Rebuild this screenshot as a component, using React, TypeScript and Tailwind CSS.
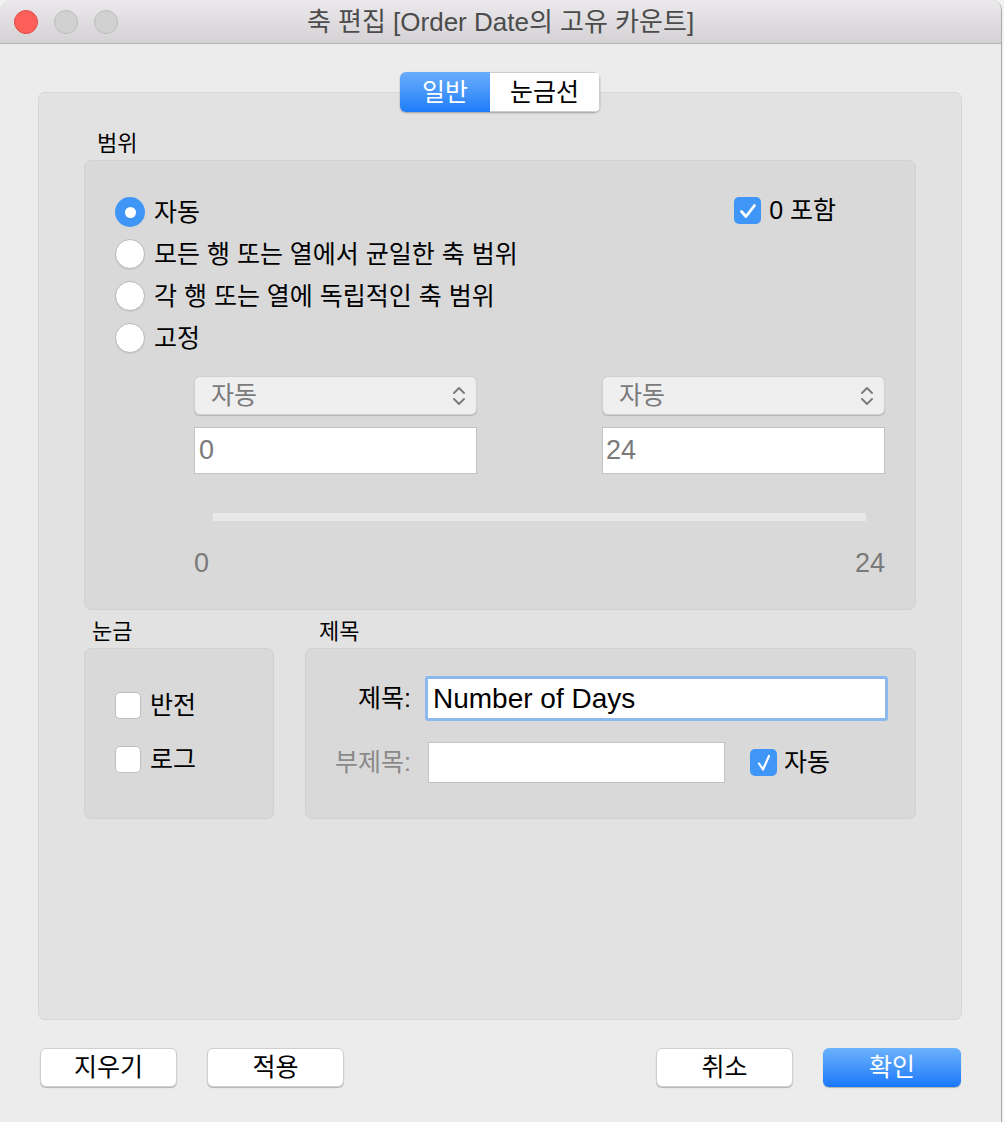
import React from 'react'

const FONT = "font-['Liberation_Sans','Noto_Sans_CJK_KR',sans-serif]"

const Radio = ({ checked, label }: { checked?: boolean; label: string }) => (
  <div className="flex h-[30px] items-center">
    {checked ? (
      <div className="flex h-[30px] w-[30px] items-center justify-center rounded-full bg-[#3f96f6]">
        <div className="h-[11px] w-[11px] rounded-full bg-white" />
      </div>
    ) : (
      <div className="h-[30px] w-[30px] rounded-full border border-[#b9b9b9] bg-white shadow-[0_1px_1px_rgba(0,0,0,0.08)]" />
    )}
    <span className="ml-[9px] text-[25px] leading-none text-black">{label}</span>
  </div>
)

const Check = ({ checked, thin }: { checked?: boolean; thin?: boolean }) =>
  checked ? (
    <div className="flex h-[27px] w-[27px] items-center justify-center rounded-[5px] bg-[#3f96f6]">
      <svg width="20" height="20" viewBox="0 0 20 20" fill="none">
        <path
          d={thin ? 'M5 10.5 L9 16.5 L15 3' : 'M3.5 10.5 L8 15.5 L16.5 4.5'}
          stroke="white"
          strokeWidth={thin ? 2.2 : 2.8}
          strokeLinecap="round"
          strokeLinejoin="round"
        />
      </svg>
    </div>
  ) : (
    <div className="h-[27px] w-[26px] rounded-[5px] border border-[#bdbdbd] bg-white" />
  )

const Select = () => (
  <div className="flex h-[39px] w-[283px] items-center justify-between rounded-[6px] border border-[#d0d0d0] bg-[#efefef] pl-[16px] pr-[10px] shadow-[0_1px_1px_rgba(0,0,0,0.18)]">
    <span className="text-[25px] leading-none text-[#7b7b7b]">자동</span>
    <svg width="14" height="24" viewBox="0 0 14 24" fill="none">
      <path d="M2 9 L7 4 L12 9" stroke="#7d7d7d" strokeWidth="2" strokeLinecap="round" strokeLinejoin="round" />
      <path d="M2 15 L7 20 L12 15" stroke="#7d7d7d" strokeWidth="2" strokeLinecap="round" strokeLinejoin="round" />
    </svg>
  </div>
)

const Button = ({ label, primary }: { label: string; primary?: boolean }) => (
  <button
    className={
      primary
        ? 'flex h-[39px] w-[138px] items-center justify-center rounded-[6px] bg-gradient-to-b from-[#6bb2fb] to-[#1577fa] text-[25px] leading-none text-white shadow-[0_1px_1px_rgba(0,0,0,0.25)]'
        : 'flex h-[39px] w-[137px] items-center justify-center rounded-[6px] border border-[#cfcfcf] bg-white text-[25px] leading-none text-black shadow-[0_1px_1px_rgba(0,0,0,0.25)]'
    }
  >
    {label}
  </button>
)

export default function App() {
  return (
    <div className={`${FONT} flex h-[1122px] w-[1004px] bg-[#f2f2f2]`}>
      <div className="flex h-full w-[1002px] flex-col overflow-hidden rounded-t-[10px] border-r border-[#a9a9a9] bg-[#ececec]">
        {/* title bar */}
        <div className="relative flex h-[44px] shrink-0 items-center justify-center border-b border-[#b1b1b1] bg-gradient-to-b from-[#ebe9eb] to-[#d4d2d4]">
          <div className="absolute left-[14px] top-[10px] flex gap-[16px]">
            <div className="h-[24px] w-[24px] rounded-full border border-[#e14942] bg-[#fc5f58]" />
            <div className="h-[24px] w-[24px] rounded-full border border-[#bcbcbc] bg-[#d1d1d1]" />
            <div className="h-[24px] w-[24px] rounded-full border border-[#bcbcbc] bg-[#d1d1d1]" />
          </div>
          <span className="text-[26px] leading-none text-[#4c4c4c]">축 편집 [Order Date의 고유 카운트]</span>
        </div>

        {/* main panel */}
        <div className="ml-[38px] mt-[48px] flex h-[928px] w-[924px] flex-col rounded-[7px] border border-[#d6d6d6] bg-[#e2e2e2] px-[45px]">
          <div className="-mt-[21px] flex self-center overflow-hidden rounded-[6px] shadow-[0_1px_2px_rgba(0,0,0,0.3)]">
            <div className="flex h-[40px] w-[90px] items-center justify-center bg-gradient-to-b from-[#69adfb] to-[#1b7cf9] text-[25px] leading-none text-white">
              일반
            </div>
            <div className="flex h-[40px] w-[110px] items-center justify-center border border-l-0 border-[#cdcdcd] bg-white text-[25px] leading-none text-black">
              눈금선
            </div>
          </div>

          <div className="ml-[13px] mt-[20px] text-[22px] leading-[24px] text-black">범위</div>
          <div className="mt-[4px] flex h-[450px] flex-col rounded-[7px] border border-[#d0d0d0] bg-[#d9d9d9] pl-[30px] pr-[30px] pt-[36px]">
            <div className="flex items-start justify-between pr-[49px]">
              <div className="flex flex-col gap-[12px]">
                <Radio checked label="자동" />
                <Radio label="모든 행 또는 열에서 균일한 축 범위" />
                <Radio label="각 행 또는 열에 독립적인 축 범위" />
                <Radio label="고정" />
              </div>
              <div className="flex items-center">
                <Check checked />
                <span className="ml-[8px] text-[25px] leading-none text-black">0 포함</span>
              </div>
            </div>

            <div className="ml-[79px] mt-[23px] flex flex-col">
              <div className="flex justify-between">
                <Select />
                <Select />
              </div>
              <div className="mt-[12px] flex justify-between">
                <div className="flex h-[47px] w-[283px] items-center border border-[#c3c3c3] bg-white px-[4px] text-[27px] text-[#7a7a7a]">0</div>
                <div className="flex h-[47px] w-[283px] items-center border border-[#c3c3c3] bg-white px-[3px] text-[27px] text-[#7a7a7a]">24</div>
              </div>
              <div className="mx-[19px] mt-[39px] h-[8px] bg-[#e8e8e8]" />
              <div className="mt-[29px] flex justify-between text-[27px] leading-none text-[#7a7a7a]">
                <span>0</span>
                <span>24</span>
              </div>
            </div>
          </div>

          <div className="mt-[10px] flex gap-[31px]">
            <div className="flex w-[190px] flex-col">
              <div className="ml-[8px] text-[22px] leading-[24px] text-black">눈금</div>
              <div className="mt-[4px] flex h-[171px] flex-col gap-[27px] rounded-[7px] border border-[#d0d0d0] bg-[#d9d9d9] pl-[30px] pt-[43px]">
                <div className="flex items-center">
                  <Check />
                  <span className="ml-[9px] text-[25px] leading-none text-black">반전</span>
                </div>
                <div className="flex items-center">
                  <Check />
                  <span className="ml-[9px] text-[25px] leading-none text-black">로그</span>
                </div>
              </div>
            </div>
            <div className="flex flex-1 flex-col">
              <div className="ml-[14px] text-[22px] leading-[24px] text-black">제목</div>
              <div className="mt-[4px] flex h-[171px] flex-col rounded-[7px] border border-[#d0d0d0] bg-[#d9d9d9] pt-[27px]">
                <div className="flex items-center">
                  <span className="w-[105px] text-right text-[25px] leading-none text-black">제목:</span>
                  <div className="ml-[14px] flex h-[45px] w-[463px] items-center rounded-[3px] border-[3px] border-[#8cb8f0] bg-white px-[5px]">
                    <span className="text-[28px] leading-none text-black">Number of Days</span>
                  </div>
                </div>
                <div className="mt-[21px] flex items-center">
                  <span className="w-[105px] text-right text-[25px] leading-none text-[#8a8a8a]">부제목:</span>
                  <div className="ml-[17px] h-[41px] w-[297px] border border-[#c3c3c3] bg-white" />
                  <div className="ml-[25px] flex items-center">
                    <Check checked thin />
                    <span className="ml-[7px] text-[25px] leading-none text-black">자동</span>
                  </div>
                </div>
              </div>
            </div>
          </div>
        </div>

        {/* footer buttons */}
        <div className="ml-[40px] mr-[40px] mt-[28px] flex items-center">
          <Button label="지우기" />
          <div className="ml-[30px]">
            <Button label="적용" />
          </div>
          <div className="flex-1" />
          <Button label="취소" />
          <div className="ml-[30px]">
            <Button label="확인" primary />
          </div>
        </div>
      </div>
    </div>
  )
}
